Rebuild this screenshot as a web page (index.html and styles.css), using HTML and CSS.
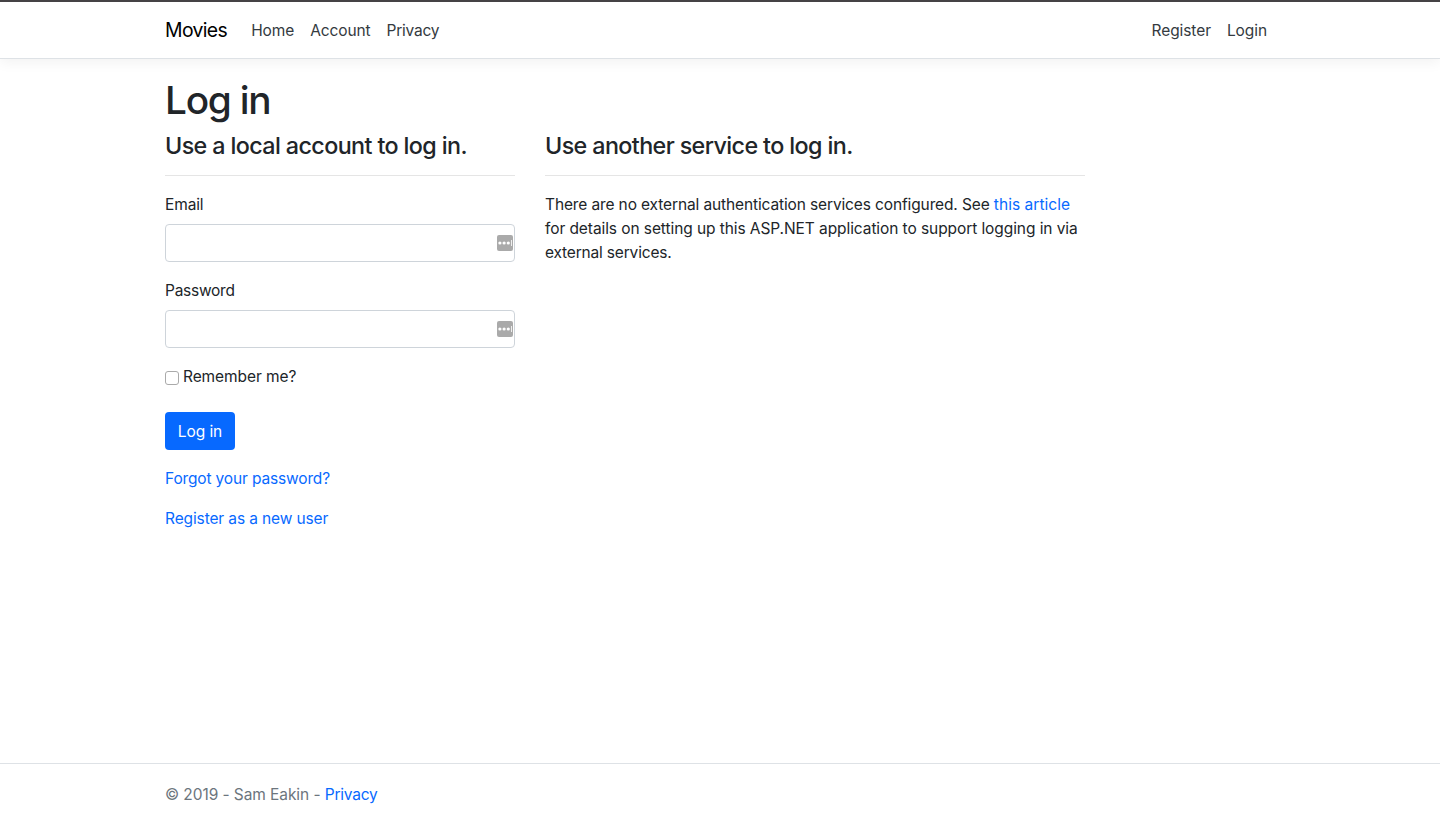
FILE: index.html
```html
<!DOCTYPE html>
<html lang="en">
<head>
<meta charset="utf-8">
<title>Log in - Movies</title>
<link rel="stylesheet" href="styles.css">
</head>
<body>
<header class="site-header">
  <nav class="container navbar">
    <a class="brand" href="#">Movies</a>
    <ul class="nav">
      <li><a class="home" href="#">Home</a></li>
      <li><a class="account" href="#">Account</a></li>
      <li><a class="privacy" href="#">Privacy</a></li>
    </ul>
    <ul class="nav nav-right">
      <li><a href="#">Register</a></li>
      <li><a href="#">Login</a></li>
    </ul>
  </nav>
</header>
<main class="container main">
  <h1>Log in</h1>
  <div class="row">
    <section class="local">
      <h4>Use a local account to log in.</h4>
      <hr>
      <form>
        <div class="group">
          <label class="email-label" for="email">Email</label>
          <div class="field">
            <input id="email" type="text">
            <svg class="key" viewBox="0 0 16 16"><rect width="16" height="16" rx="2"/><g fill="#fff"><circle cx="2.9" cy="8" r="1.6"/><circle cx="7.1" cy="8" r="1.6"/><circle cx="11.3" cy="8" r="1.6"/><path d="M14 5h.8v6H14z"/></g></svg>
          </div>
        </div>
        <div class="group">
          <label class="password-label" for="password">Password</label>
          <div class="field">
            <input id="password" type="password">
            <svg class="key" viewBox="0 0 16 16"><rect width="16" height="16" rx="2"/><g fill="#fff"><circle cx="2.9" cy="8" r="1.6"/><circle cx="7.1" cy="8" r="1.6"/><circle cx="11.3" cy="8" r="1.6"/><path d="M14 5h.8v6H14z"/></g></svg>
          </div>
        </div>
        <div class="group">
          <label class="remember"><input type="checkbox"><span>Remember me?</span></label>
        </div>
        <div class="group"><button type="button">Log in</button></div>
        <p><a class="forgot" href="#">Forgot your password?</a></p>
        <p><a class="new-user" href="#">Register as a new user</a></p>
      </form>
    </section>
    <section class="external">
      <h4>Use another service to log in.</h4>
      <hr>
      <p><span class="line1">There are no external authentication services configured. See <a href="#">this article</a></span><br>for details on setting up this ASP.NET application to support logging in via<br><span class="line3">external services.</span></p>
    </section>
  </div>
</main>
<footer class="site-footer">
  <div class="container">© 2019 - Sam Eakin - <a class="privacy" href="#">Privacy</a></div>
</footer>
</body>
</html>
```
FILE: styles.css
```css
* { box-sizing: border-box; }
body {
  margin: 0;
  min-height: 100vh;
  display: flex;
  flex-direction: column;
  font: 400 15.5px/24px Inter, sans-serif;
  letter-spacing: -0.08px;
  color: #212529;
  background: #fff;
}
a { color: #0769ff; text-decoration: none; }
.container { width: 1110px; margin: 0 auto; white-space: nowrap; }
.site-header {
  height: 59px;
  border-top: 2px solid #454345;
  border-bottom: 1px solid #dee2e6;
  box-shadow: 0 4px 12px rgba(0, 0, 0, .05);
}
.navbar { height: 56px; display: flex; align-items: center; }
.brand { font-size: 19.4px; line-height: 30px; letter-spacing: -.63px; color: #000; margin-right: 16px; }
.nav { list-style: none; margin: 0; padding: 0; display: flex; }
.nav a { display: block; padding: 9px 8px 7px; color: #343a40; }
.nav-right { margin-left: auto; }
.account { letter-spacing: -.12px; }
.privacy { letter-spacing: -.22px; }
.main { padding-top: 17px; flex: 1; }
h1 { margin: 0 0 7px; font-size: 38.8px; line-height: 48px; font-weight: 500; letter-spacing: -1.25px; }
.row { display: flex; gap: 30px; }
.local { width: 350px; }
.external { width: 540px; }
h4 { margin: 0; font-size: 23.3px; line-height: 29px; font-weight: 500; letter-spacing: -.6px; }
hr { margin: 15px 0 16px; border: 0; border-top: 1px solid #e5e5e5; }
.group { margin-bottom: 16px; }
.group > label { display: block; padding-top: 1px; margin-bottom: 7px; }
.email-label { letter-spacing: -.12px; }
.password-label { letter-spacing: -.26px; }
.field { position: relative; height: 38px; }
.field input {
  width: 100%;
  height: 38px;
  padding: 6px 12px;
  border: 1px solid #ced4da;
  border-radius: 4px;
  font: inherit;
}
.key { position: absolute; right: 2px; top: 11px; width: 16px; height: 16px; fill: #aaa; }
.group > .remember { display: flex; margin: 0 0 23px; gap: 4px; }
.remember input {
  appearance: none;
  width: 14px;
  height: 14px;
  margin: 6px 0 0;
  border: 1px solid #aaa;
  border-radius: 3px;
}
button {
  display: block;
  width: 70px;
  height: 38px;
  padding: 2px 0 0;
  border: 0;
  border-radius: 4px;
  background: #0769ff;
  color: #fff;
  font: inherit;
  letter-spacing: inherit;
}
p { margin: 0 0 15px; padding-top: 1px; }
.forgot { letter-spacing: -.15px; }
.new-user { letter-spacing: -.12px; }
.line1 { letter-spacing: -.125px; }
.line1 a { letter-spacing: .04px; }
.line3 { letter-spacing: -.18px; }
.site-footer { height: 55px; border-top: 1px solid #dee2e6; padding-top: 19px; color: #6c757d; }
```
